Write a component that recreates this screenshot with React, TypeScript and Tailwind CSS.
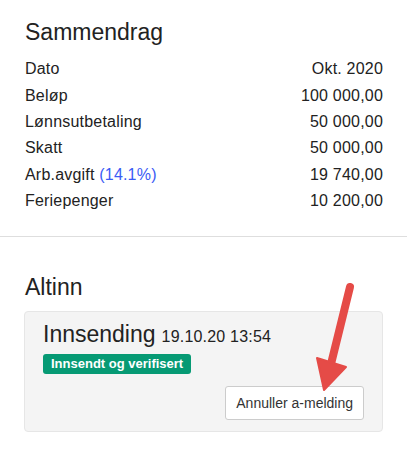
import React from "react";

const rows: { label: string; extra?: string; value: string }[] = [
  { label: "Dato", value: "Okt. 2020" },
  { label: "Beløp", value: "100 000,00" },
  { label: "Lønnsutbetaling", value: "50 000,00" },
  { label: "Skatt", value: "50 000,00" },
  { label: "Arb.avgift", extra: "(14.1%)", value: "19 740,00" },
  { label: "Feriepenger", value: "10 200,00" },
];

export default function App() {
  return (
    <div className="relative w-[407px] h-[462px] bg-white text-[#222] font-['Liberation_Sans',Arial,sans-serif] overflow-hidden">
      {/* Summary */}
      <section className="pl-[25px] pr-[24px] pt-[17px] pb-[22px] border-b border-[#dedede]">
        <h2 className="text-[23px] leading-[30px] mb-[9px]">Sammendrag</h2>
        <div className="flex flex-col">
          {rows.map((row) => (
            <div key={row.label} className="flex justify-between items-center h-[26.4px] text-[16px] tracking-[0.2px]">
              <span>
                {row.label}
                {row.extra && <span className="text-[#3b5bf5]"> {row.extra}</span>}
              </span>
              <span>{row.value}</span>
            </div>
          ))}
        </div>
      </section>

      {/* Altinn */}
      <section className="px-[24px] pt-[35px]">
        <h2 className="text-[23px] leading-[30px] mb-[9px] pl-px">Altinn</h2>
        <div className="bg-[#f4f4f4] border border-[#e6e6e6] rounded-[4px] pl-[18px] pr-[18px] pt-[8px] pb-[11px]">
          <div className="flex items-baseline gap-[6px]">
            <span className="text-[23px] leading-[28px]">Innsending</span>
            <span className="text-[16px] tracking-[0.2px]">19.10.20 13:54</span>
          </div>
          <span className="inline-block mt-[5px] bg-[#069a74] text-white font-bold text-[13px] leading-[20px] px-[8px] rounded-[3px]">
            Innsendt og verifisert
          </span>
          <div className="flex justify-end mt-[11px]">
            <button className="bg-white border border-[#cccccc] rounded-[3px] h-[34px] px-[10px] text-[14px] text-[#333]">
              Annuller a-melding
            </button>
          </div>
        </div>
      </section>

      {/* Annotation arrow */}
      <svg className="absolute left-0 top-0 pointer-events-none" width="407" height="462" viewBox="0 0 407 462">
        <line x1="350" y1="287" x2="330" y2="368" stroke="#e54b47" strokeWidth="8" strokeLinecap="round" />
        <polygon points="317,358 346,367 324,390" fill="#e54b47" stroke="#e54b47" strokeWidth="2" strokeLinejoin="round" />
      </svg>
    </div>
  );
}
